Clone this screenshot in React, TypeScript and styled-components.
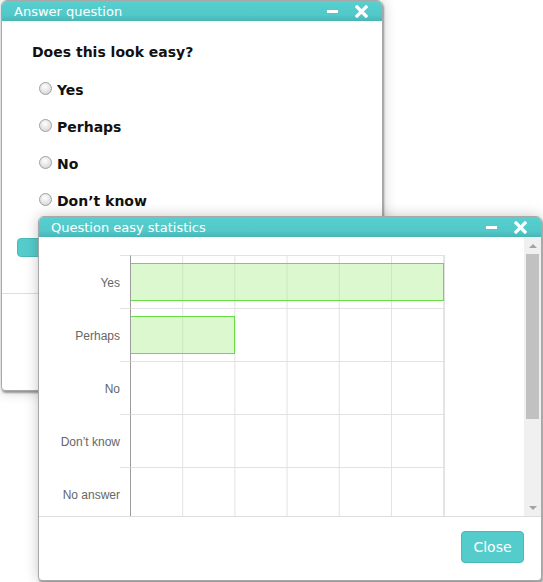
import React from 'react';
import styled, { createGlobalStyle } from 'styled-components';

const GlobalStyle = createGlobalStyle`
html, body {
    margin: 0;
    padding: 0;
    background: #ffffff;
}
`;

const Desktop = styled.div`
position: relative;
width: 543px;
height: 582px;
overflow: hidden;
background: #ffffff;
font-family: "DejaVu Sans", Verdana, sans-serif;
`;

interface WindowProps {
    left: number;
    top: number;
    w: number;
    h: number;
}

const Window = styled.div<WindowProps>`
position: absolute;
left: ${(p) => p.left}px;
top: ${(p) => p.top}px;
width: ${(p) => p.w}px;
height: ${(p) => p.h}px;
box-sizing: border-box;
display: flex;
flex-direction: column;
background: #ffffff;
border: 1px solid #a8a8a8;
border-radius: 6px 6px 4px 4px;
box-shadow: 1px 2px 2px rgba(0, 0, 0, 0.35), 0 0 14px rgba(0, 0, 0, 0.22);
overflow: hidden;
`;

const TitleBar = styled.div`
height: 20px;
flex: none;
display: flex;
align-items: center;
padding: 0 14px 0 12px;
background: linear-gradient(#58cfcf, #52c8c8 70%, #46b6b6);
color: #ffffff;
font-size: 13px;
`;

const Title = styled.div`
flex: 1;
white-space: nowrap;
`;

const TitleIcons = styled.div`
display: flex;
align-items: center;
gap: 17px;
`;

const Minimize = styled.div`
width: 11px;
height: 3px;
background: #ffffff;
`;

const CloseX = () => (
    <svg width="13" height="13" viewBox="0 0 13 13">
        <path d="M2 2 L11 11 M11 2 L2 11" stroke="#ffffff" strokeWidth="3.2" strokeLinecap="square" />
    </svg>
);

const QuestionBody = styled.div`
padding: 23px 0 0 30px;
`;

const Question = styled.div`
font-size: 14px;
font-weight: bold;
color: #111;
margin-bottom: 11px;
`;

const Option = styled.label`
display: flex;
align-items: center;
height: 37px;
padding-left: 7px;
font-size: 14px;
font-weight: bold;
color: #111;
`;

const Radio = styled.span`
width: 11px;
height: 11px;
border-radius: 50%;
border: 1px solid #a0a0a0;
background: radial-gradient(circle at 45% 35%, #ffffff, #dcdcdc 70%, #c8c8c8);
margin-right: 5px;
margin-top: -3px;
`;

const AnswerFooter = styled.div`
margin-top: 19px;
padding: 0 0 0 15px;
height: 55px;
border-bottom: 1px solid #dddddd;
`;

const TealButton = styled.button`
background: #55cccc;
border: 1px solid #4ab9b9;
border-radius: 4px;
color: #ffffff;
font-family: "DejaVu Sans", Verdana, sans-serif;
font-size: 14px;
`;

const SubmitButton = styled(TealButton)`
width: 90px;
height: 19px;
`;

const StatsContent = styled.div`
flex: none;
height: 279px;
display: flex;
border-bottom: 1px solid #dddddd;
`;

const ChartArea = styled.div`
flex: 1;
overflow: hidden;
padding-top: 18px;
`;

const ChartRow = styled.div`
display: flex;
height: 53px;
`;

const Label = styled.div`
width: 81px;
margin-top: 2px;
text-align: right;
align-self: center;
font-family: "Liberation Sans", Arial, sans-serif;
font-size: 12px;
color: #666666;
`;

const Tick = styled.div`
width: 10px;
border-top: 1px solid #e2e2e2;
`;

const Plot = styled.div`
position: relative;
width: 313px;
border-top: 1px solid #e2e2e2;
border-left: 1px solid #9c9c9c;
border-right: 1px solid #e2e2e2;
background-image: linear-gradient(to right, transparent 51px, #e2e2e2 51px, #e2e2e2 52px, transparent 52px);
background-size: 52.2px 100%;
display: flex;
align-items: center;
`;

const Bar = styled.div`
height: 38px;
margin-top: -1px;
box-sizing: border-box;
background: rgba(170, 238, 140, 0.42);
border: 1px solid #66dd44;
border-left: none;
`;

const Scrollbar = styled.div`
width: 17px;
flex: none;
background: #f0f0f0;
display: flex;
flex-direction: column;
align-items: center;
`;

const Arrow = styled.div<{ up?: boolean }>`
height: 17px;
flex: none;
display: flex;
align-items: center;
justify-content: center;
&::after {
    content: '';
    border-left: 4px solid transparent;
    border-right: 4px solid transparent;
    ${(p) => (p.up ? 'border-bottom: 4px solid #a3a3a3;' : 'border-top: 4px solid #a3a3a3;')}
}
`;

const Thumb = styled.div`
width: 13px;
height: 165px;
background: #c1c1c1;
`;

const Track = styled.div`
flex: 1;
`;

const StatsFooter = styled.div`
flex: 1;
display: flex;
justify-content: flex-end;
align-items: flex-start;
padding: 14px 17px 0 0;
`;

const CloseButton = styled(TealButton)`
width: 63px;
height: 32px;
`;

const answers = ['Yes', 'Perhaps', 'No', 'Don\u2019t know'];

const stats = [
    { label: 'Yes', value: 6 },
    { label: 'Perhaps', value: 2 },
    { label: 'No', value: 0 },
    { label: 'Don\u2019t know', value: 0 },
    { label: 'No answer', value: 0 },
];

function App() {
    const max = 6;
    return (
        <Desktop>
            <GlobalStyle />
            <Window left={1} top={0} w={382} h={391}>
                <TitleBar>
                    <Title>Answer question</Title>
                    <TitleIcons>
                        <Minimize />
                        <CloseX />
                    </TitleIcons>
                </TitleBar>
                <QuestionBody>
                    <Question>Does this look easy?</Question>
                    {answers.map((a) => (
                        <Option key={a}>
                            <Radio />
                            {a}
                        </Option>
                    ))}
                </QuestionBody>
                <AnswerFooter>
                    <SubmitButton />
                </AnswerFooter>
            </Window>
            <Window left={38} top={216} w={504} h={365}>
                <TitleBar>
                    <Title>Question easy statistics</Title>
                    <TitleIcons>
                        <Minimize />
                        <CloseX />
                    </TitleIcons>
                </TitleBar>
                <StatsContent>
                    <ChartArea>
                        {stats.map((s) => (
                            <ChartRow key={s.label}>
                                <Label>{s.label}</Label>
                                <Tick />
                                <Plot>
                                    {s.value > 0 && <Bar style={{ width: `${(s.value / max) * 313}px` }} />}
                                </Plot>
                            </ChartRow>
                        ))}
                    </ChartArea>
                    <Scrollbar>
                        <Arrow up />
                        <Thumb />
                        <Track />
                        <Arrow />
                    </Scrollbar>
                </StatsContent>
                <StatsFooter>
                    <CloseButton>Close</CloseButton>
                </StatsFooter>
            </Window>
        </Desktop>
    );
}

export default App;
